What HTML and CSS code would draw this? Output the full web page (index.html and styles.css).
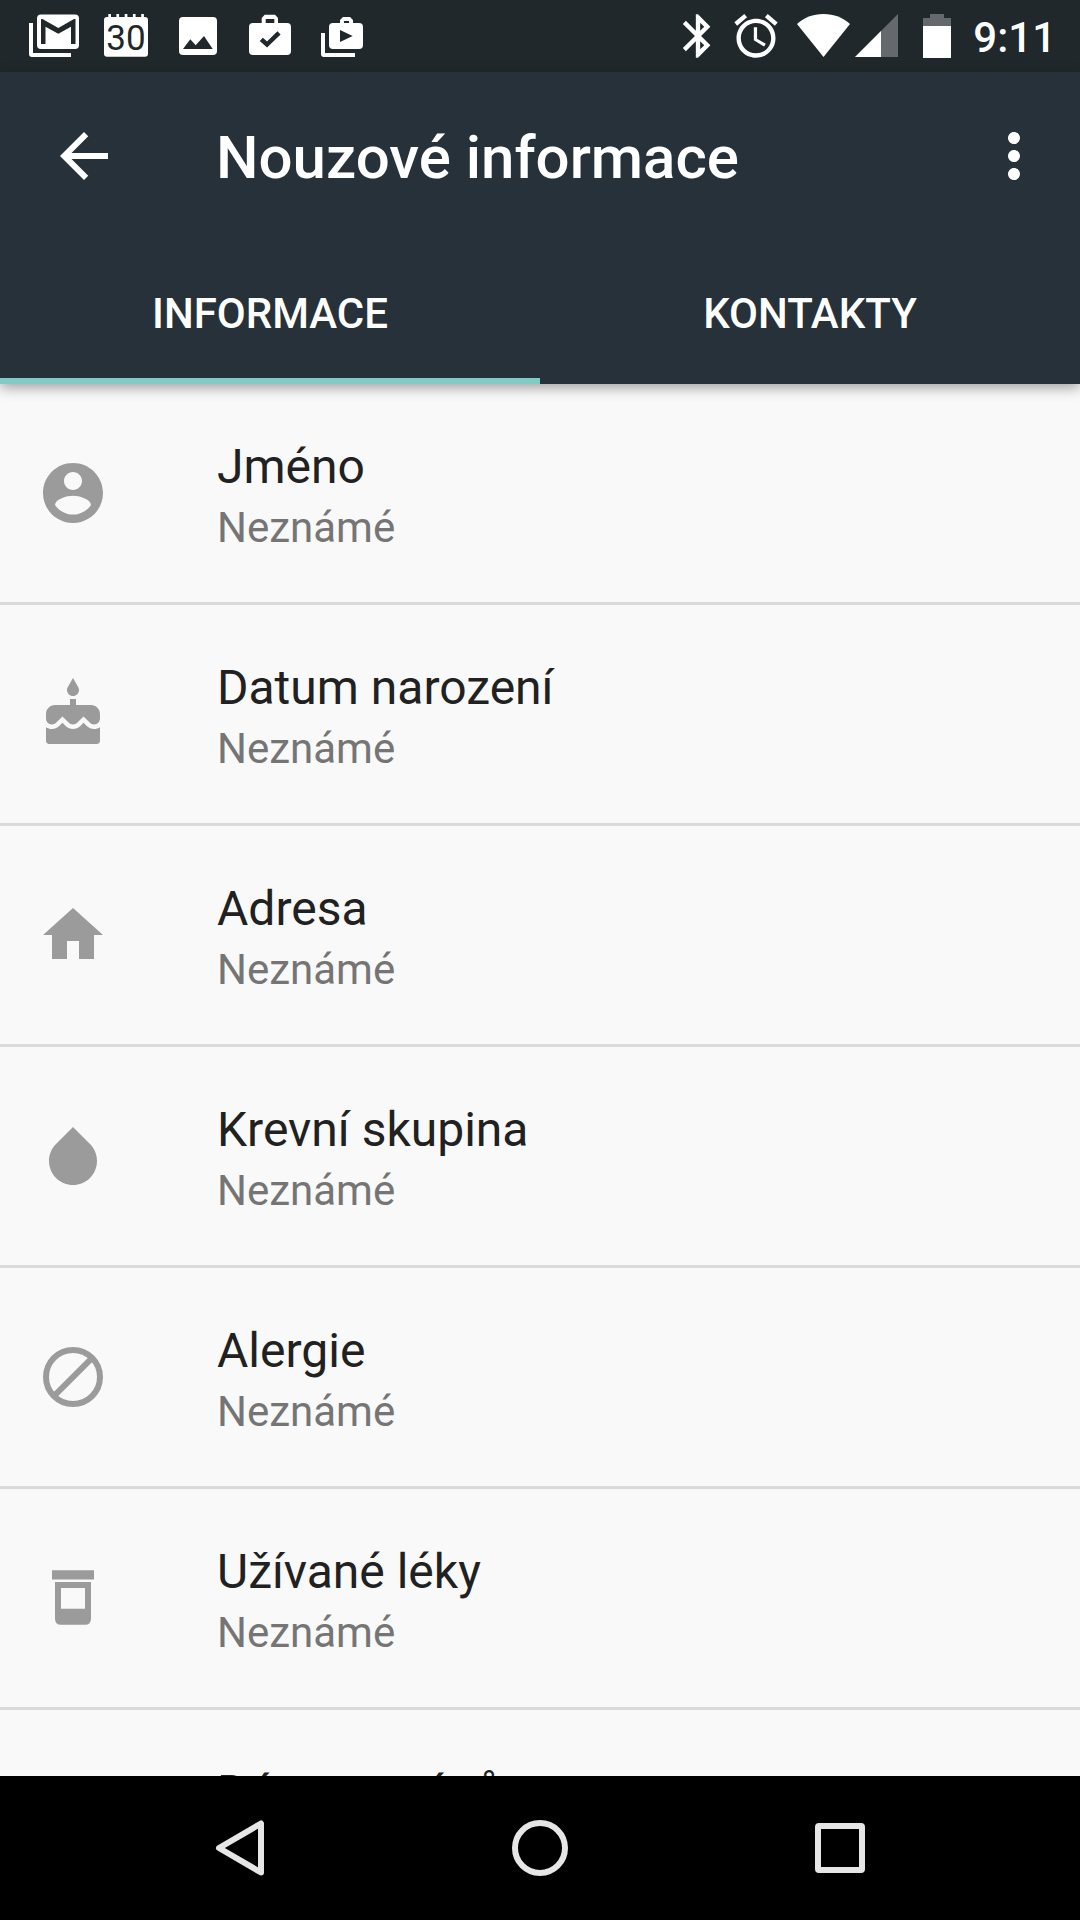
FILE: index.html
```html
<!DOCTYPE html>
<html lang="cs">
<head>
    <meta charset="UTF-8">
    <meta name="viewport" content="width=device-width, initial-scale=1.0">
    <title>Nouzové informace</title>
    <link rel="stylesheet" href="styles.css">
</head>
<body>
    <div class="status-bar">
        <div class="notifications">
            <svg viewBox="0 0 72 72">
                <path d="M11 23h4v30h38v4H14q-3 0-3-3z"/>
                <rect x="19" y="14.5" width="42" height="34.5" rx="4"/>
                <path class="cut" d="M23 44V19h1.5L40.3 28 56 19h1.5v25H53V26.7L40.3 33.8 27.5 26.7V44z"/>
            </svg>
            <svg viewBox="0 0 72 72">
                <path d="M18.3 14h2.7v4h-2.7zM26.4 14h2.7v4h-2.7zM34.7 14h2.7v4h-2.7zM42.9 14h2.7v4h-2.7zM51.2 14h2.7v4h-2.7z"/>
                <rect x="14" y="17" width="44" height="39.7" rx="3"/>
                <text class="cut day" x="36" y="50" text-anchor="middle">30</text>
            </svg>
            <svg viewBox="0 0 72 72">
                <rect x="17" y="17" width="38" height="38" rx="4"/>
                <path class="cut" d="M21 49l7.3-9.7 5.4 6L42 36l8.7 13z"/>
            </svg>
            <svg viewBox="0 0 72 72">
                <rect x="15" y="23" width="42" height="32" rx="4"/>
                <path d="M27.7 24v-6l3-3.3H41l3 3.3v6h-3.7v-5h-8.6v5z"/>
                <path class="check" d="M27.3 39.3l5.7 5.2L45 32.8"/>
            </svg>
            <svg viewBox="0 0 72 72">
                <path d="M15 33h4v20h30v4H18q-3 0-3-3z"/>
                <rect x="23" y="23" width="34" height="26" rx="4"/>
                <path d="M34 24v-4l3-3h7l3 3v4h-4v-3h-5v3z"/>
                <path class="cut" d="M34 30l12.7 6L34 42z"/>
            </svg>
        </div>
        <div class="system">
            <svg class="bluetooth" viewBox="0 0 24 24"><path d="M17.71 7.71L12 2h-1v7.59L6.41 5 5 6.41 10.59 12 5 17.59 6.41 19 11 14.41V22h1l5.71-5.71-4.3-4.29 4.3-4.29zM13 5.83l1.88 1.88L13 9.59V5.83zm1.88 10.46L13 18.17v-3.76l1.88 1.88z"/></svg>
            <svg class="alarm" viewBox="0 0 24 24"><path d="M22 5.72l-4.6-3.86-1.29 1.53 4.6 3.86L22 5.72zM7.88 3.39L6.6 1.86 2 5.71l1.29 1.53 4.59-3.85zM12.5 8H11v6l4.75 2.85.75-1.23-4-2.37V8zM12 4c-4.97 0-9 4.03-9 9s4.02 9 9 9c4.97 0 9-4.03 9-9s-4.03-9-9-9zm0 16c-3.87 0-7-3.13-7-7s3.13-7 7-7 7 3.13 7 7-3.13 7-7 7z"/></svg>
            <svg class="wifi" viewBox="0 0 56 72"><path d="M1 24C8 17.5 17 14 27.5 14S47 17.5 54 24L27.5 57z"/></svg>
            <svg class="signal" viewBox="0 0 48 72">
                <path class="dim" d="M3 57l43-43v43z"/>
                <path d="M3 57h26V31z"/>
            </svg>
            <svg class="battery" viewBox="0 0 36 72">
                <path class="dim" d="M5 26v-8h7v-4h14v4h7v8z"/>
                <path d="M5 26h28v32H5z"/>
            </svg>
            <span class="clock">9:11</span>
        </div>
    </div>

    <header class="app-bar">
        <div class="toolbar">
            <svg class="icon" viewBox="0 0 24 24"><path d="M20 11H7.83l5.59-5.59L12 4l-8 8 8 8 1.41-1.41L7.83 13H20v-2z"/></svg>
            <h1>Nouzové informace</h1>
            <svg class="icon" viewBox="0 0 24 24"><path d="M12 8c1.1 0 2-.9 2-2s-.9-2-2-2-2 .9-2 2 .9 2 2 2zm0 2c-1.1 0-2 .9-2 2s.9 2 2 2 2-.9 2-2-.9-2-2-2zm0 6c-1.1 0-2 .9-2 2s.9 2 2 2 2-.9 2-2-.9-2-2-2z"/></svg>
        </div>
        <nav class="tabs">
            <div class="tab active">INFORMACE</div>
            <div class="tab">KONTAKTY</div>
        </nav>
    </header>

    <main class="list">
        <div class="item">
            <svg class="icon" viewBox="0 0 24 24"><path d="M12 2C6.48 2 2 6.48 2 12s4.48 10 10 10 10-4.48 10-10S17.52 2 12 2zm0 3c1.66 0 3 1.34 3 3s-1.34 3-3 3-3-1.34-3-3 1.34-3 3-3zm0 14.2c-2.5 0-4.71-1.28-6-3.22.03-1.99 4-3.08 6-3.08 1.99 0 5.97 1.09 6 3.08-1.29 1.94-3.5 3.22-6 3.22z"/></svg>
            <div class="text">
                <div class="name">Jméno</div>
                <div class="value">Neznámé</div>
            </div>
        </div>
        <div class="item">
            <svg class="icon" viewBox="0 0 24 24"><path d="M12 6c1.11 0 2-.9 2-2 0-.38-.1-.73-.29-1.03L12 0l-1.71 2.97c-.19.3-.29.65-.29 1.03 0 1.1.9 2 2 2zm4.6 9.99l-1.07-1.07-1.08 1.07c-1.3 1.3-3.58 1.31-4.89 0l-1.07-1.07-1.09 1.07C6.75 16.64 5.88 17 4.96 17c-.73 0-1.4-.23-1.96-.61V21c0 .55.45 1 1 1h16c.55 0 1-.45 1-1v-4.61c-.56.38-1.23.61-1.96.61-.92 0-1.79-.36-2.44-1.01zM18 9h-5V7h-2v2H6c-1.66 0-3 1.34-3 3v1.54c0 1.08.88 1.96 1.96 1.96.52 0 1.02-.2 1.38-.57l2.14-2.13 2.13 2.13c.74.74 2.03.74 2.77 0l2.14-2.13 2.13 2.13c.37.37.86.57 1.38.57 1.08 0 1.96-.88 1.96-1.96V12C21 10.34 19.66 9 18 9z"/></svg>
            <div class="text">
                <div class="name">Datum narození</div>
                <div class="value">Neznámé</div>
            </div>
        </div>
        <div class="item">
            <svg class="icon" viewBox="0 0 24 24"><path d="M10 20v-6h4v6h5v-8h3L12 3 2 12h3v8z"/></svg>
            <div class="text">
                <div class="name">Adresa</div>
                <div class="value">Neznámé</div>
            </div>
        </div>
        <div class="item">
            <svg class="icon" viewBox="0 0 24 24"><path d="M17.66 8L12 2.35 6.34 8C4.78 9.56 4 11.64 4 13.64s.78 4.11 2.34 5.67 3.61 2.35 5.66 2.35 4.1-.79 5.66-2.35S20 15.64 20 13.64 19.22 9.56 17.66 8z"/></svg>
            <div class="text">
                <div class="name">Krevní skupina</div>
                <div class="value">Neznámé</div>
            </div>
        </div>
        <div class="item">
            <svg class="icon outline" viewBox="0 0 24 24"><circle cx="12" cy="12" r="9"/><path d="M5.8 18.2L18.2 5.8"/></svg>
            <div class="text">
                <div class="name">Alergie</div>
                <div class="value">Neznámé</div>
            </div>
        </div>
        <div class="item">
            <svg class="icon" viewBox="0 0 24 24"><path d="M5 2.75h14v3.1H5zM6 6.7h12v12.2q0 2-2 2H8q-2 0-2-2zM8 8.7v6.9h8V8.7z" fill-rule="evenodd"/></svg>
            <div class="text">
                <div class="name">Užívané léky</div>
                <div class="value">Neznámé</div>
            </div>
        </div>
        <div class="item">
            <div class="icon"></div>
            <div class="text">
                <div class="name">Dárce orgánů</div>
            </div>
        </div>
    </main>

    <footer class="nav-bar">
        <svg viewBox="0 0 72 72"><path d="M57 11.5v49L15 36z"/></svg>
        <svg viewBox="0 0 72 72"><circle cx="36" cy="36" r="25"/></svg>
        <svg viewBox="0 0 72 72"><rect x="14" y="14" width="44" height="44" rx="1"/></svg>
    </footer>
</body>
</html>
```

FILE: styles.css
```css
* {
    box-sizing: border-box;
}

body {
    margin: 0;
    width: 1080px;
    height: 1920px;
    display: flex;
    flex-direction: column;
    overflow: hidden;
    background: #f9f9f9;
    font-family: Roboto, sans-serif;
}

svg {
    display: block;
    flex: none;
    fill: #fff;
}

/* status bar */
.status-bar {
    flex: none;
    height: 72px;
    display: flex;
    justify-content: space-between;
    padding: 0 24px 0 18px;
    background: #20282b;
    color: #fff;
}

.notifications, .system {
    display: flex;
    align-items: center;
}

.notifications svg {
    width: 72px;
    height: 72px;
}

.cut {
    fill: #20282b;
}

.day {
    font-size: 35px;
    font-weight: 400;
}

.check {
    fill: none;
    stroke: #20282b;
    stroke-width: 4.5;
}

.dim {
    fill: #65696d;
}

.bluetooth, .alarm {
    width: 52px;
    height: 52px;
}

.alarm {
    margin-left: 6px;
}

.wifi {
    width: 56px;
    height: 72px;
    margin-left: 14px;
}

.signal {
    width: 48px;
    height: 72px;
}

.battery {
    width: 36px;
    height: 72px;
    margin-left: 18px;
}

.clock {
    margin-left: 19px;
    padding-top: 4px;
    font-size: 42px;
    font-weight: 500;
    line-height: 70px;
}

/* app bar */
.app-bar {
    flex: none;
    position: relative;
    z-index: 1;
    background: #263139;
    color: #fff;
    box-shadow: 0 4px 12px rgba(0, 0, 0, 0.35);
}

.toolbar {
    height: 168px;
    display: flex;
    align-items: center;
    padding: 0 30px 0 48px;
}

.icon {
    flex: none;
    width: 72px;
    height: 72px;
}

h1 {
    flex: 1;
    margin: 0 0 0 96px;
    padding-top: 4px;
    font-size: 60px;
    font-weight: 500;
    line-height: 70px;
}

.tabs {
    display: flex;
    height: 144px;
}

.tab {
    flex: 1;
    padding-top: 49px;
    font-size: 42px;
    font-weight: 500;
    line-height: 50px;
    text-align: center;
}

.tab.active {
    border-bottom: 6px solid #80cbc4;
}

/* list */
.list {
    flex: 1;
    min-height: 0;
    overflow: hidden;
}

.item {
    height: 221px;
    display: flex;
    align-items: center;
    padding-left: 37px;
    border-bottom: 3px solid #dadada;
}

.item .icon {
    fill: #9b9b9b;
}

.item .outline {
    fill: none;
    stroke: #9b9b9b;
    stroke-width: 2;
}

.text {
    align-self: flex-start;
    margin-left: 108px;
    padding-top: 55px;
}

.name {
    color: #212121;
    font-size: 48px;
    line-height: 56px;
}

.value {
    margin-top: 8px;
    color: #757575;
    font-size: 42px;
    line-height: 50px;
}

/* navigation bar */
.nav-bar {
    flex: none;
    height: 144px;
    display: flex;
    align-items: center;
    justify-content: center;
    gap: 228px;
    background: #000;
}

.nav-bar svg {
    width: 72px;
    height: 72px;
    fill: none;
    stroke: #e6e6e6;
    stroke-width: 6;
    stroke-linejoin: round;
}
```
